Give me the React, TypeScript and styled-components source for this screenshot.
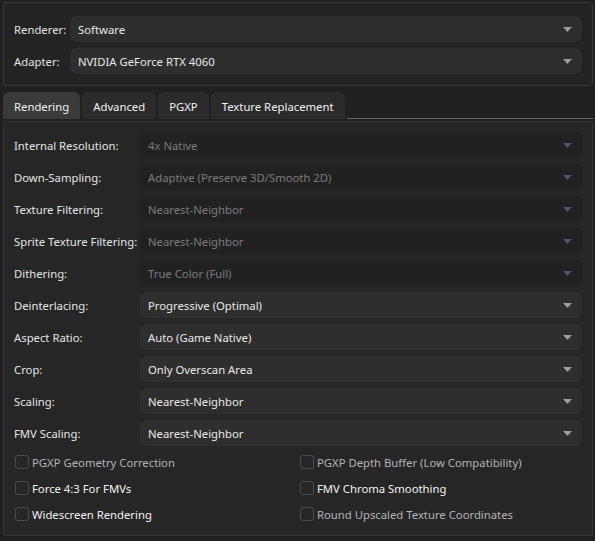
import React from "react";
import styled, { createGlobalStyle } from "styled-components";

const Global = createGlobalStyle`
  html, body { margin: 0; padding: 0; background: #202020; }
  body { font-family: "Noto Sans", "Open Sans", sans-serif; font-size: 11.3px; color: #e2e2e2; }
  * { box-sizing: border-box; }
`;

const Window = styled.div`
  width: 595px;
  height: 541px;
  padding: 2px 2px 5px 3px;
  display: flex;
  flex-direction: column;
  background: #202020;
`;

const GroupBox = styled.div`
  border: 1px solid #3a3a3a;
  border-radius: 3px;
  background: #232323;
  padding: 13px 10px 11px 10px;
  display: grid;
  grid-template-columns: 56px 1fr;
  row-gap: 6px;
  align-items: center;
`;

const FieldLabel = styled.div`
  white-space: nowrap;
  color: #e4e4e4;
  height: 26px;
  line-height: 25px;
  padding-top: 1px;
`;

const ComboBox = styled.div<{ $disabled?: boolean }>`
  height: 26px;
  border-radius: 7px;
  background: ${(p) => (p.$disabled ? "#212121" : "#2e2e2e")};
  color: ${(p) => (p.$disabled ? "#7c7c7c" : "#e8e8e8")};
  display: flex;
  align-items: center;
  justify-content: space-between;
  padding: 1px 10px 0 8px;
  white-space: nowrap;
`;

const Arrow = styled.svg`
  flex: none;
  display: block;
  margin-top: -1px;
`;

const TabBar = styled.div`
  margin-top: 6px;
  height: 27px;
  display: flex;
  gap: 2px;
`;

const Tab = styled.div<{ $active?: boolean }>`
  height: 27px;
  padding: 1px 11px 0;
  display: flex;
  align-items: center;
  border-radius: 6px 6px 0 0;
  background: ${(p) => (p.$active ? "#3a3a3a" : "#2b2b2b")};
  color: #f0f0f0;
  white-space: nowrap;
`;

const TabFill = styled.div`
  flex: 1;
  border-bottom: 1px solid #666;
  height: 27px;
`;

const Pane = styled.div`
  margin-top: 2px;
  flex: 1;
  border: 1px solid #363636;
  border-radius: 2px;
  background: #262626;
  padding: 10px 10px 7px 10px;
  display: flex;
  flex-direction: column;
`;

const FormGrid = styled.div`
  display: grid;
  grid-template-columns: 126px 1fr;
  grid-auto-rows: 26px;
  row-gap: 6px;
  align-items: center;
`;

const CheckGrid = styled.div`
  margin-top: 3px;
  display: grid;
  grid-template-columns: 285px 1fr;
  grid-auto-rows: 26px;
  padding-left: 1px;
`;

const CheckRow = styled.label<{ $disabled?: boolean }>`
  display: flex;
  align-items: center;
  gap: 3px;
  color: ${(p) => (p.$disabled ? "#b4b4b4" : "#f2f2f2")};
  white-space: nowrap;
  padding-top: 1px;
`;

const Box = styled.span`
  width: 14px;
  height: 14px;
  margin-top: -1px;
  border: 1px solid #4c4c4c;
  border-radius: 3px;
  background: #262626;
  flex: none;
`;

function Combo({ value, disabled }: { value: string; disabled?: boolean }) {
  return (
    <ComboBox $disabled={disabled}>
      <span>{value}</span>
      <Arrow width="9" height="5" viewBox="0 0 9 5">
        <polygon points="0,0 9,0 4.5,5" fill={disabled ? "#4a5866" : "#9c9c9c"} />
      </Arrow>
    </ComboBox>
  );
}

const rows: [string, string, boolean][] = [
  ["Internal Resolution:", "4x Native", true],
  ["Down-Sampling:", "Adaptive (Preserve 3D/Smooth 2D)", true],
  ["Texture Filtering:", "Nearest-Neighbor", true],
  ["Sprite Texture Filtering:", "Nearest-Neighbor", true],
  ["Dithering:", "True Color (Full)", true],
  ["Deinterlacing:", "Progressive (Optimal)", false],
  ["Aspect Ratio:", "Auto (Game Native)", false],
  ["Crop:", "Only Overscan Area", false],
  ["Scaling:", "Nearest-Neighbor", false],
  ["FMV Scaling:", "Nearest-Neighbor", false],
];

const checks: [string, boolean][] = [
  ["PGXP Geometry Correction", true],
  ["PGXP Depth Buffer (Low Compatibility)", true],
  ["Force 4:3 For FMVs", false],
  ["FMV Chroma Smoothing", false],
  ["Widescreen Rendering", false],
  ["Round Upscaled Texture Coordinates", true],
];

export default function App() {
  return (
    <>
      <Global />
      <Window>
        <GroupBox>
          <FieldLabel>Renderer:</FieldLabel>
          <Combo value="Software" />
          <FieldLabel>Adapter:</FieldLabel>
          <Combo value="NVIDIA GeForce RTX 4060" />
        </GroupBox>
        <TabBar>
          <Tab $active>Rendering</Tab>
          <Tab>Advanced</Tab>
          <Tab>PGXP</Tab>
          <Tab>Texture Replacement</Tab>
          <TabFill />
        </TabBar>
        <Pane>
          <FormGrid>
            {rows.map(([l, v, d]) => (
              <React.Fragment key={l}>
                <FieldLabel>{l}</FieldLabel>
                <Combo value={v} disabled={d} />
              </React.Fragment>
            ))}
          </FormGrid>
          <CheckGrid>
            {checks.map(([l, d]) => (
              <CheckRow key={l} $disabled={d}>
                <Box />
                {l}
              </CheckRow>
            ))}
          </CheckGrid>
        </Pane>
      </Window>
    </>
  );
}
